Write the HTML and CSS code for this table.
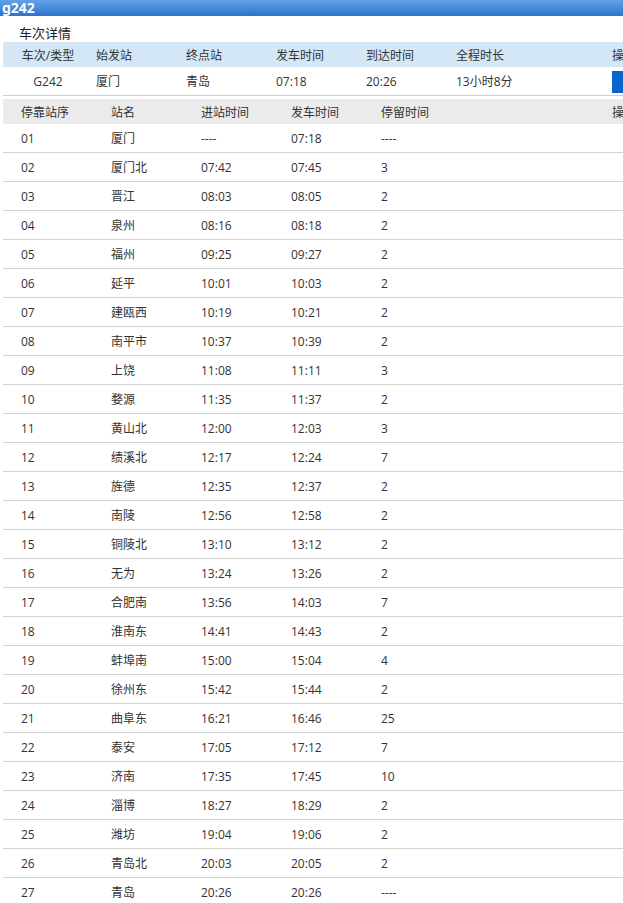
FILE: index.html
```html
<!DOCTYPE html>
<html lang="zh">
<head>
<meta charset="utf-8">
<title>g242</title>
<link rel="stylesheet" href="styles.css">
</head>
<body>
<div class="page">
  <div class="titlebar">g242</div>
  <div class="section-title">车次详情</div>
  <div class="info">
    <div class="info-row info-head">
      <div class="c c-first">车次/类型</div>
      <div class="c">始发站</div>
      <div class="c">终点站</div>
      <div class="c">发车时间</div>
      <div class="c">到达时间</div>
      <div class="c c-wide">全程时长</div>
      <div class="c">操作</div>
    </div>
    <div class="info-row info-data">
      <div class="c c-first">G242</div>
      <div class="c">厦门</div>
      <div class="c">青岛</div>
      <div class="c">07:18</div>
      <div class="c">20:26</div>
      <div class="c c-wide">13小时8分</div>
      <div class="c"><span class="btn">购票</span></div>
    </div>
  </div>
  <div class="stops">
    <div class="srow shead">
      <div class="s">停靠站序</div><div class="s">站名</div><div class="s">进站时间</div><div class="s">发车时间</div><div class="s s-wide">停留时间</div><div class="s">操作</div>
    </div>
    <div class="srow"><div class="s">01</div><div class="s">厦门</div><div class="s">----</div><div class="s">07:18</div><div class="s s-wide">----</div><div class="s"></div></div>
    <div class="srow"><div class="s">02</div><div class="s">厦门北</div><div class="s">07:42</div><div class="s">07:45</div><div class="s s-wide">3</div><div class="s"></div></div>
    <div class="srow"><div class="s">03</div><div class="s">晋江</div><div class="s">08:03</div><div class="s">08:05</div><div class="s s-wide">2</div><div class="s"></div></div>
    <div class="srow"><div class="s">04</div><div class="s">泉州</div><div class="s">08:16</div><div class="s">08:18</div><div class="s s-wide">2</div><div class="s"></div></div>
    <div class="srow"><div class="s">05</div><div class="s">福州</div><div class="s">09:25</div><div class="s">09:27</div><div class="s s-wide">2</div><div class="s"></div></div>
    <div class="srow"><div class="s">06</div><div class="s">延平</div><div class="s">10:01</div><div class="s">10:03</div><div class="s s-wide">2</div><div class="s"></div></div>
    <div class="srow"><div class="s">07</div><div class="s">建瓯西</div><div class="s">10:19</div><div class="s">10:21</div><div class="s s-wide">2</div><div class="s"></div></div>
    <div class="srow"><div class="s">08</div><div class="s">南平市</div><div class="s">10:37</div><div class="s">10:39</div><div class="s s-wide">2</div><div class="s"></div></div>
    <div class="srow"><div class="s">09</div><div class="s">上饶</div><div class="s">11:08</div><div class="s">11:11</div><div class="s s-wide">3</div><div class="s"></div></div>
    <div class="srow"><div class="s">10</div><div class="s">婺源</div><div class="s">11:35</div><div class="s">11:37</div><div class="s s-wide">2</div><div class="s"></div></div>
    <div class="srow"><div class="s">11</div><div class="s">黄山北</div><div class="s">12:00</div><div class="s">12:03</div><div class="s s-wide">3</div><div class="s"></div></div>
    <div class="srow"><div class="s">12</div><div class="s">绩溪北</div><div class="s">12:17</div><div class="s">12:24</div><div class="s s-wide">7</div><div class="s"></div></div>
    <div class="srow"><div class="s">13</div><div class="s">旌德</div><div class="s">12:35</div><div class="s">12:37</div><div class="s s-wide">2</div><div class="s"></div></div>
    <div class="srow"><div class="s">14</div><div class="s">南陵</div><div class="s">12:56</div><div class="s">12:58</div><div class="s s-wide">2</div><div class="s"></div></div>
    <div class="srow"><div class="s">15</div><div class="s">铜陵北</div><div class="s">13:10</div><div class="s">13:12</div><div class="s s-wide">2</div><div class="s"></div></div>
    <div class="srow"><div class="s">16</div><div class="s">无为</div><div class="s">13:24</div><div class="s">13:26</div><div class="s s-wide">2</div><div class="s"></div></div>
    <div class="srow"><div class="s">17</div><div class="s">合肥南</div><div class="s">13:56</div><div class="s">14:03</div><div class="s s-wide">7</div><div class="s"></div></div>
    <div class="srow"><div class="s">18</div><div class="s">淮南东</div><div class="s">14:41</div><div class="s">14:43</div><div class="s s-wide">2</div><div class="s"></div></div>
    <div class="srow"><div class="s">19</div><div class="s">蚌埠南</div><div class="s">15:00</div><div class="s">15:04</div><div class="s s-wide">4</div><div class="s"></div></div>
    <div class="srow"><div class="s">20</div><div class="s">徐州东</div><div class="s">15:42</div><div class="s">15:44</div><div class="s s-wide">2</div><div class="s"></div></div>
    <div class="srow"><div class="s">21</div><div class="s">曲阜东</div><div class="s">16:21</div><div class="s">16:46</div><div class="s s-wide">25</div><div class="s"></div></div>
    <div class="srow"><div class="s">22</div><div class="s">泰安</div><div class="s">17:05</div><div class="s">17:12</div><div class="s s-wide">7</div><div class="s"></div></div>
    <div class="srow"><div class="s">23</div><div class="s">济南</div><div class="s">17:35</div><div class="s">17:45</div><div class="s s-wide">10</div><div class="s"></div></div>
    <div class="srow"><div class="s">24</div><div class="s">淄博</div><div class="s">18:27</div><div class="s">18:29</div><div class="s s-wide">2</div><div class="s"></div></div>
    <div class="srow"><div class="s">25</div><div class="s">潍坊</div><div class="s">19:04</div><div class="s">19:06</div><div class="s s-wide">2</div><div class="s"></div></div>
    <div class="srow"><div class="s">26</div><div class="s">青岛北</div><div class="s">20:03</div><div class="s">20:05</div><div class="s s-wide">2</div><div class="s"></div></div>
    <div class="srow"><div class="s">27</div><div class="s">青岛</div><div class="s">20:26</div><div class="s">20:26</div><div class="s s-wide">----</div><div class="s"></div></div>
  </div>
</div>
</body>
</html>
```

FILE: styles.css
```css
html, body {
  margin: 0;
  padding: 0;
  background: #fff;
  overflow: hidden;
}
.page {
  width: 623px;
  overflow: hidden;
  font-family: "Open Sans", "Noto Sans CJK SC", sans-serif;
  font-size: 12px;
  color: #333;
}
.titlebar {
  height: 16px;
  line-height: 16px;
  padding-left: 2px;
  background: linear-gradient(#64a2e6, #2a74cc);
  color: #fff;
  font-family: "Noto Sans", "Noto Sans CJK SC", sans-serif;
  font-weight: bold;
  font-size: 14px;
}
.section-title {
  height: 26px;
  line-height: 34px;
  padding-left: 19px;
  font-size: 13px;
  color: #222;
}
.info, .stops {
  margin-left: 3px;
  width: 700px;
}
.info-row {
  display: flex;
  align-items: center;
}
.info-head {
  height: 25px;
  background: #d4e7f7;
}
.info-data {
  height: 28px;
  border-bottom: 1px solid #cfcfcf;
}
.c {
  width: 90px;
  padding-left: 3px;
  box-sizing: border-box;
  flex: none;
  white-space: nowrap;
}
.c-first {
  text-align: center;
  padding-left: 0;
}
.c-wide {
  width: 156px;
}
.btn {
  display: inline-block;
  width: 64px;
  height: 22px;
  background: #0a64cc;
  color: #fff;
  line-height: 22px;
  text-align: center;
  margin-top: 1px;
}
.stops {
  margin-top: 3px;
}
.srow {
  display: flex;
  align-items: center;
  height: 28px;
  border-bottom: 1px solid #d2d2d2;
}
.srow.shead {
  height: 25px;
  background: #ebebeb;
  border-bottom: none;
}
.s {
  width: 90px;
  padding-left: 18px;
  box-sizing: border-box;
  flex: none;
  white-space: nowrap;
}
.s-wide {
  width: 231px;
}
```
